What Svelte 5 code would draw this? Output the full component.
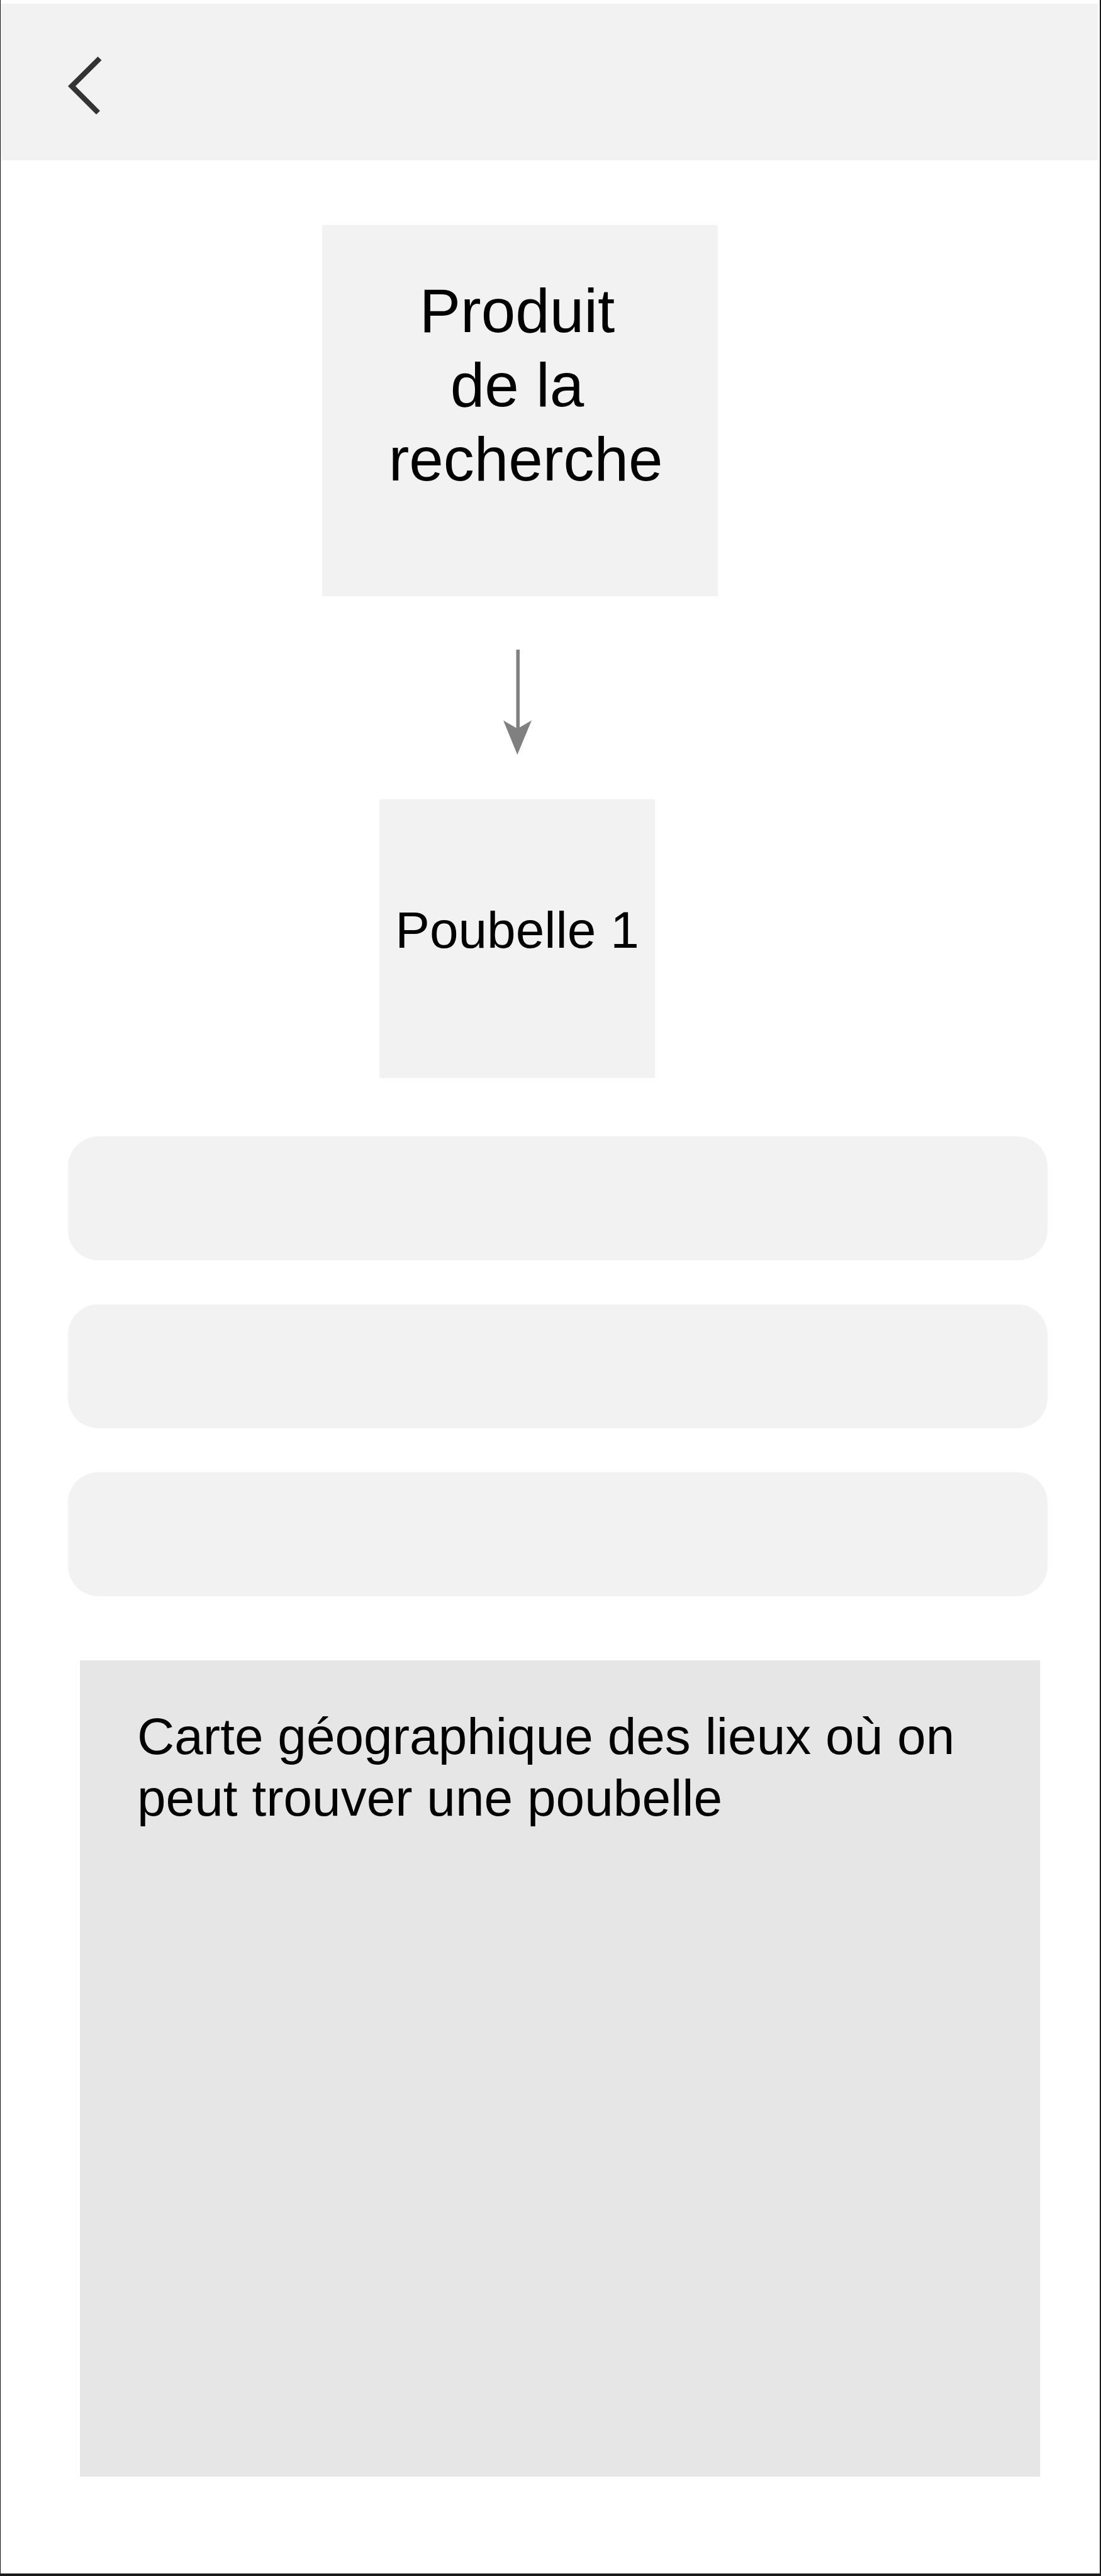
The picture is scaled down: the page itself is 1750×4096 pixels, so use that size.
<script>
  const fields = $state([
    { label: 'Information 1', value: '' },
    { label: 'Information 2', value: '' },
    { label: 'Information 3', value: '' }
  ]);
</script>

<div class="screen">
  <header class="bar">
    <button class="back" type="button" aria-label="Retour">
      <svg viewBox="0 0 54 92" width="54" height="92" aria-hidden="true">
        <path d="M47.5 0 L53.5 5.7 L12 47 L51 86.3 L45 92 L0 47 Z" fill="#333" />
      </svg>
    </button>
  </header>

  <main>
    <section class="flow">
      <h1 class="product">Produit<br />de la<br />&nbsp;recherche</h1>
      <div class="next">
        <svg class="arrow" viewBox="0 0 45 167" width="45" height="167" aria-hidden="true">
          <path d="M20.5 0 H26 V123.5 L45 112.5 L22.3 167 L0 112.5 L20.5 124.5 Z" fill="#808080" />
        </svg>
        <h2 class="bin">Poubelle 1</h2>
      </div>
    </section>

    <form class="fields">
      {#each fields as field}
        <input type="text" aria-label={field.label} bind:value={field.value} />
      {/each}
    </form>

    <section class="map">
      <p>Carte géographique des lieux où on peut trouver une poubelle</p>
    </section>
  </main>
</div>

<style>
  :global(body) {
    margin: 0;
    background: #fff;
  }

  .screen {
    box-sizing: border-box;
    display: flex;
    flex-direction: column;
    min-height: 100vh;
    padding-top: 6px;
    border: solid #1a1a1a;
    border-width: 0 2px 4px 1px;
    color: #000;
    font-family: "Liberation Sans", Arial, Helvetica, sans-serif;
  }

  .bar {
    display: flex;
    margin-right: 3px;
    padding: 84px 107px 73px;
    background: #f2f2f2;
  }

  .back {
    display: flex;
    padding: 0;
    border: 0;
    background: none;
    cursor: pointer;
  }

  main {
    display: flex;
    flex: 1;
    flex-direction: column;
    padding: 103px 83px 154px 107px;
  }

  .flow {
    display: flex;
    flex-direction: column;
    align-items: center;
    margin-right: 120px;
  }

  .product,
  .bin {
    box-sizing: border-box;
    margin: 0;
    background: #f2f2f2;
    font-weight: 400;
    text-align: center;
  }

  .product {
    width: 629px;
    max-width: 100%;
    padding: 77px 9px 159px 0;
    font-size: 98px;
    line-height: 118px;
  }

  .next {
    display: flex;
    flex-direction: column;
    align-items: center;
    gap: 71px;
    padding: 85px 9px 0 0;
  }

  .bin {
    width: 438px;
    padding: 159px 0 186px;
    font-size: 82px;
    line-height: 98px;
    white-space: nowrap;
  }

  .fields {
    display: flex;
    flex-direction: column;
    gap: 70px;
    margin-top: 93px;
  }

  input {
    box-sizing: border-box;
    width: 100%;
    height: 197px;
    padding: 0 48px;
    border: 0;
    border-radius: 48px;
    background: #f2f2f2;
    color: inherit;
    font: inherit;
    font-size: 82px;
  }

  .map {
    flex: 1;
    margin: 102px 12px 0 19px;
    padding: 72px 91px;
    background: #e6e6e6;
  }

  .map p {
    margin: 0;
    font-size: 82px;
    line-height: 98px;
  }
</style>
